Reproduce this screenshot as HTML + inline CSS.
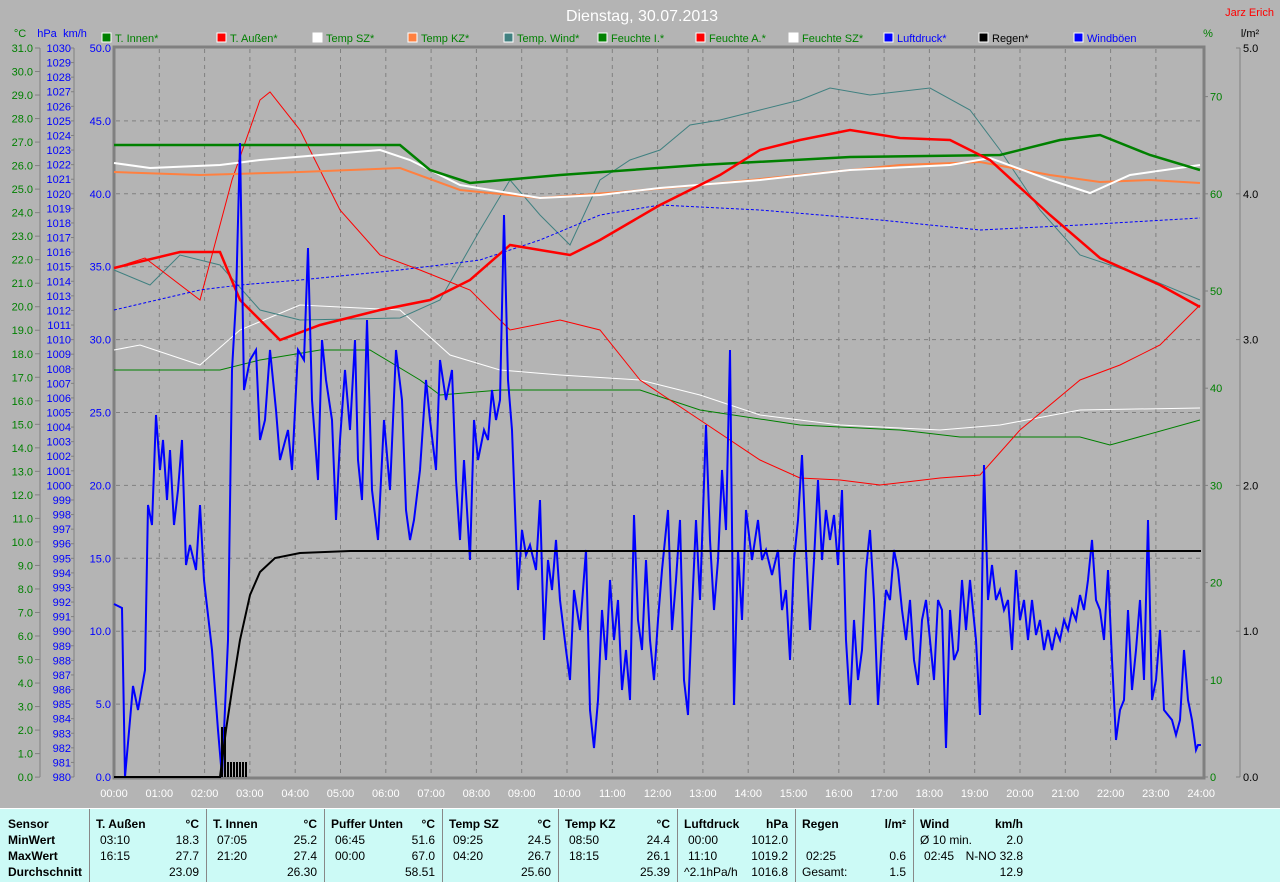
<!DOCTYPE html>
<html><head><meta charset="utf-8"><style>
html,body{margin:0;padding:0;background:#b4b4b4;width:1280px;height:881px;overflow:hidden;font-family:"Liberation Sans",sans-serif}
svg{position:absolute;left:0;top:0}
#tbl{position:absolute;left:0;top:808px;width:1280px;height:73px;background:#ccfaf6;border-top:1px solid #fff}
.c{position:absolute;top:0;height:73px;border-left:1px solid #888;font-size:12px;color:#000}
.r{position:absolute;white-space:nowrap}
</style></head><body>
<svg id="s" width="1280" height="808" xmlns="http://www.w3.org/2000/svg" font-family="Liberation Sans, sans-serif"></svg>
<div id="tbl"></div>
<script>
const S=document.getElementById('s');let h='';
const X=t=>114+45.3*t;
h+='<rect x="114" y="47" width="1090" height="731" fill="none" stroke="#808080" stroke-width="3"/>';
for(let i=1;i<24;i++)h+=`<line x1="${X(i)}" y1="49" x2="${X(i)}" y2="776" stroke="#808080" stroke-dasharray="4,4"/>`;
for(let k=5;k<50;k+=5){let y=48+(50-k)*14.58;h+=`<line x1="116" y1="${y}" x2="1202" y2="${y}" stroke="#808080" stroke-dasharray="4,4"/>`;}
h+='<text x="642" y="21" fill="#fff" font-size="16" text-anchor="middle">Dienstag, 30.07.2013</text>';
h+='<text x="1274" y="16" fill="#f00" font-size="11" text-anchor="end">Jarz Erich</text>';
const lg=[["T. Innen*","#008000","#008000"],["T. Außen*","#f00","#008000"],["Temp SZ*","#fff","#008000"],["Temp KZ*","#ff8040","#008000"],["Temp. Wind*","#408080","#008000"],["Feuchte I.*","#008000","#008000"],["Feuchte A.*","#f00","#008000"],["Feuchte SZ*","#fff","#008000"],["Luftdruck*","#00f","#00f"],["Regen*","#000","#000"],["Windböen","#00f","#00f"]];
const lx=[102,180,257,335,413,490,685,762,840,917,995];
const lx2=[102,180,257,335,413,490,685,762,840,917,995];
const LX=[102,180,257,335,413,490,45,0,0,0,0];
const pos=[102,180,257,335,413,490,685-112+0,762-112,840-112,917-112,995-112];
const px=[102,180,257,335,413,490,573+0,650,728,805,883];
const real=[102,180,257,335,413,490,45,0,0,0,0];
const xs=[102,180,257,335,413,490,0,0,0,0,0];
const fin=[102,180,257,335,413,490,0,0,0,0,0];
const lp=[102,180,257,335,413,490,0,0,0,0,0];
const L=[102,179,257,334,412,490,685,762,839,917,994];
const LL=[102,217,313,408,504,598,696,789,884,979,1074];
lg.forEach((l,i)=>{h+=`<rect x="${LL[i]}" y="33" width="9" height="9" fill="${l[1]}" stroke="#fff"/><text x="${LL[i]+13}" y="42" font-size="11" fill="${l[2]}">${l[0]}</text>`;});
h+='<text x="20" y="37" font-size="11" fill="#008000" text-anchor="middle">°C</text><text x="47" y="37" font-size="11" fill="#00f" text-anchor="middle">hPa</text><text x="75" y="37" font-size="11" fill="#00f" text-anchor="middle">km/h</text><text x="1208" y="37" font-size="11" fill="#008000" text-anchor="middle">%</text><text x="1250" y="37" font-size="11" fill="#000" text-anchor="middle">l/m²</text>';
h+='<line x1="40" y1="48" x2="40" y2="777" stroke="#808080"/><line x1="74" y1="48" x2="74" y2="777" stroke="#808080"/><line x1="1240" y1="48" x2="1240" y2="777" stroke="#808080"/>';
for(let v=31;v>=0;v--){let y=48+(31-v)*23.52;h+=`<line x1="35" y1="${y}" x2="40" y2="${y}" stroke="#808080"/><text x="33" y="${y+4}" font-size="11" fill="#008000" text-anchor="end">${v.toFixed(1)}</text>`;}
for(let p=1030;p>=980;p--){let y=48+(1030-p)*14.58;h+=`<line x1="71" y1="${y}" x2="74" y2="${y}" stroke="#808080"/><text x="71" y="${y+4}" font-size="11" fill="#00f" text-anchor="end">${p}</text>`;}
for(let k=50;k>=0;k-=5){let y=48+(50-k)*14.58;h+=`<text x="111" y="${y+4}" font-size="11" fill="#00f" text-anchor="end">${k.toFixed(1)}</text>`;}
for(let v=0;v<=70;v+=10){let y=777-v*9.72;h+=`<line x1="1204" y1="${y}" x2="1208" y2="${y}" stroke="#808080"/><text x="1210" y="${y+4}" font-size="11" fill="#008000">${v}</text>`;}
for(let v=0;v<=5;v++){let y=777-v*145.8;h+=`<line x1="1236" y1="${y}" x2="1240" y2="${y}" stroke="#808080"/><text x="1243" y="${y+4}" font-size="11" fill="#000">${v.toFixed(1)}</text>`;}
for(let i=0;i<=24;i++){h+=`<text x="${X(i)}" y="797" font-size="11" fill="#fff" text-anchor="middle">${String(i).padStart(2,'0')}:00</text>`;}
const P=(pts,c,w,d)=>{h+=`<polyline fill="none" stroke="${c}" stroke-width="${w}" ${d?'stroke-dasharray="'+d+'"':''} points="${pts}"/>`;};
P("114,370 220,370 260,360 320,350 370,350 420,380 440,395 500,390 640,390 700,410 800,425 900,430 960,437 1080,437 1110,445 1200,420","#008000",1);
P("114,350 140,345 200,365 240,330 300,305 400,310 450,355 500,370 560,375 640,380 700,395 760,415 840,425 940,430 1000,425 1080,410 1200,408","#fff",1);
P("114,270 150,285 180,255 220,265 260,310 300,320 400,318 440,300 480,230 510,180 540,215 570,245 600,180 630,160 660,150 690,125 720,120 760,110 800,100 830,88 870,95 930,88 970,110 1000,150 1040,210 1080,255 1140,275 1200,300","#408080",1);
P("114,268 145,258 200,300 232,180 260,100 270,92 300,130 340,210 380,255 420,270 470,290 510,330 560,320 600,330 640,380 700,420 760,460 800,478 840,480 880,485 940,478 980,475 1020,430 1080,380 1120,365 1160,345 1200,305","#f00",1);
P("114,310 200,290 240,285 300,280 400,270 480,260 540,240 600,215 660,205 760,210 880,220 980,230 1080,225 1200,218","#00f",1,"3,2");
P("114,172 200,175 300,172 400,168 460,190 540,198 620,192 700,185 800,175 900,165 980,162 1050,175 1100,182 1150,180 1200,183","#ff8040",2);
P("114,163 150,168 220,165 260,160 320,155 380,150 410,160 460,185 540,198 600,195 660,188 760,180 850,170 950,165 990,158 1050,180 1090,193 1130,175 1200,165","#fff",2);
P("114,145 400,145 430,170 470,183 560,175 700,165 850,157 1000,155 1060,140 1100,135 1150,155 1200,170","#008000",2.5);
P("114,268 180,252 220,252 240,300 280,340 320,325 380,310 430,300 470,280 510,245 540,250 570,255 600,240 660,205 720,175 760,150 800,140 850,130 900,138 950,140 990,160 1050,215 1100,258 1160,285 1200,307","#f00",2.5);
let wb=[[114,604],[122,608],[125,777],[133,686],[138,710],[145,670],[148,505],[152,525],[156,415],[160,470],[163,440],[167,500],[170,450],[174,525],[178,490],[182,440],[186,565],[190,545],[196,570],[200,505],[204,580],[212,650],[218,730],[222,777],[228,640],[232,370],[236,300],[240,143],[244,390],[250,360],[256,350],[260,440],[265,420],[270,350],[276,410],[280,460],[288,430],[292,470],[298,350],[304,360],[308,248],[312,400],[318,480],[322,340],[326,380],[332,420],[336,520],[340,440],[345,370],[350,430],[355,340],[358,460],[362,500],[367,320],[372,490],[378,540],[384,420],[390,490],[396,350],[402,400],[406,510],[410,540],[414,520],[420,470],[426,380],[430,420],[436,470],[440,360],[446,400],[452,370],[456,480],[460,540],[464,460],[470,560],[474,420],[478,460],[484,430],[488,440],[492,390],[496,420],[500,400],[504,215],[508,380],[512,430],[518,590],[522,530],[526,555],[530,545],[536,570],[540,500],[544,640],[548,560],[552,590],[556,540],[560,600],[566,650],[570,680],[574,590],[580,630],[586,550],[590,710],[594,748],[598,700],[602,610],[606,660],[610,580],[614,640],[618,600],[622,690],[626,650],[630,700],[634,515],[638,620],[642,650],[646,560],[650,640],[654,680],[658,620],[662,570],[668,510],[672,630],[676,580],[680,520],[684,680],[688,715],[692,610],[696,520],[700,600],[706,425],[710,540],[714,610],[718,560],[722,470],[726,530],[730,350],[734,705],[738,550],[742,620],[746,510],[752,560],[758,520],[762,560],[766,550],[772,575],[778,550],[782,610],[786,590],[790,660],[794,560],[798,520],[802,455],[806,550],[810,630],[814,560],[818,480],[822,560],[826,510],[830,540],[834,515],[838,565],[842,490],[846,640],[850,705],[854,620],[858,680],[862,650],[866,570],[870,530],[874,600],[878,705],[882,640],[886,590],[890,600],[894,550],[898,570],[902,610],[906,640],[910,600],[914,660],[918,685],[922,620],[926,600],[930,640],[934,680],[938,600],[942,610],[946,748],[950,610],[954,660],[958,650],[962,580],[966,630],[970,580],[976,640],[980,715],[984,465],[988,600],[992,565],[996,600],[1000,590],[1004,610],[1008,600],[1012,650],[1016,570],[1020,620],[1024,600],[1028,640],[1032,600],[1036,635],[1040,620],[1044,650],[1048,630],[1052,650],[1056,630],[1060,640],[1064,620],[1068,630],[1072,610],[1076,620],[1080,595],[1084,610],[1088,580],[1092,540],[1096,600],[1100,610],[1104,640],[1108,570],[1112,660],[1116,740],[1120,710],[1124,700],[1128,610],[1132,690],[1136,650],[1140,600],[1144,680],[1148,520],[1152,700],[1156,680],[1160,630],[1164,710],[1168,715],[1172,720],[1176,735],[1180,720],[1184,650],[1188,700],[1192,720],[1196,750],[1198,745],[1201,745]];
P(wb.map(p=>p.join(',')).join(' '),"#00f",2);
P("114,777 220,777 226,730 232,690 240,640 250,595 260,572 275,558 300,553 350,551 1201,551","#000",2);
for(let x=222;x<=248;x+=3)h+=`<line x1="${x}" y1="777" x2="${x}" y2="${x<228?727:762}" stroke="#000" stroke-width="2"/>`;
S.innerHTML=h;
const cols=[[0,89],[89,206],[206,324],[324,442],[442,558],[558,677],[677,795],[795,913],[913,1030]];
const data=[
[["Sensor","",1],["MinWert","",1],["MaxWert","",1],["Durchschnitt","",1]],
[["T. Außen","°C",1],["03:10","18.3"],["16:15","27.7"],["","23.09"]],
[["T. Innen","°C",1],["07:05","25.2"],["21:20","27.4"],["","26.30"]],
[["Puffer Unten","°C",1],["06:45","51.6"],["00:00","67.0"],["","58.51"]],
[["Temp SZ","°C",1],["09:25","24.5"],["04:20","26.7"],["","25.60"]],
[["Temp KZ","°C",1],["08:50","24.4"],["18:15","26.1"],["","25.39"]],
[["Luftdruck","hPa",1],["00:00","1012.0"],["11:10","1019.2"],["^2.1hPa/h","1016.8"]],
[["Regen","l/m²",1],["",""],["02:25","0.6"],["Gesamt:","1.5"]],
[["Wind","km/h",1],["Ø 10 min.","2.0"],["02:45","N-NO 32.8"],["","12.9"]]];
let t='';
cols.forEach((c,i)=>{t+=`<div class="c" style="left:${c[0]}px;width:${c[1]-c[0]}px;${i==0?'border-left:none':''}">`;
data[i].forEach((r,j)=>{const y=8+j*16;const b=r[2]?'font-weight:bold;':'';const pad=(j>0&&i>0&&i!=7&&i!=8&&i!=6)?10:(i==6&&j>0&&j<3?10:(i==7&&j==2?10:(i==8&&j==2?10:6)));
t+=`<div class="r" style="${b}left:${i==0?8:pad}px;top:${y}px">${r[0]}</div><div class="r" style="${b}right:8px;top:${y}px">${r[1]}</div>`;});
t+='</div>';});
document.getElementById('tbl').innerHTML=t;
</script>
</body></html>
